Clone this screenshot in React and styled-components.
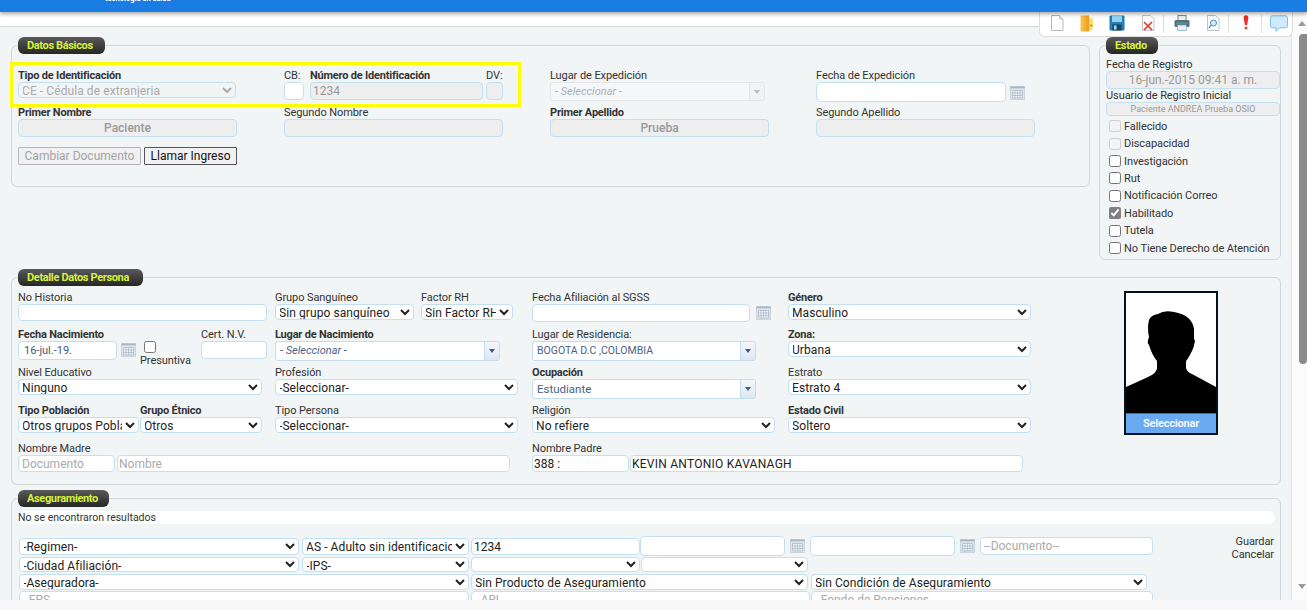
import React from "react";
import styled, { createGlobalStyle } from "styled-components";

const Global = createGlobalStyle`
  html, body { margin: 0; padding: 0; height: 610px; overflow: hidden; background: #f8f8f8; }
  * { box-sizing: border-box; }
  body { font-family: Roboto, "Liberation Sans", sans-serif; font-size: 11px; color: #333; }
`;

const Page = styled.div`display:flex;flex-direction:column;width:1307px;height:610px;position:relative;`;
const Header = styled.header`height:12px;flex:none;background:#1a7de3;box-shadow:0 2px 4px rgba(0,0,0,.35);position:relative;z-index:2;overflow:hidden;padding-left:105px;`;
const LogoText = styled.div`color:#fff;font-size:7.5px;font-weight:700;line-height:8px;margin-top:-5px;`;
const Body = styled.div`display:flex;height:588px;flex:none;`;
const Left = styled.div`width:1292px;display:flex;flex-direction:column;`;
const SubBar = styled.div`height:15px;flex:none;background:#fff;border-bottom:1px solid #d8d8d8;`;
const Main = styled.main`height:573px;overflow:hidden;background:#f1f5f6;border-right:1px solid #e2e4e5;padding:18px 0 0 11px;`;
const Bottom = styled.div`height:10px;flex:none;background:#f8f8f8;`;
const Scroll = styled.div`width:15px;flex:none;background:#fbfbfb;display:flex;flex-direction:column;align-items:flex-end;padding-top:9px;`;
const ArrowUp = styled.div`width:0;height:0;border:4px solid transparent;border-top:0;border-bottom:5px solid #9a9a9a;margin:0 1px 8px 0;`;
const Thumb = styled.div`width:8px;height:330px;background:#8b8b8b;border-radius:4px 0 4px 4px;`;
const ArrowDown = styled.div`width:0;height:0;border:4px solid transparent;border-bottom:0;border-top:5px solid #9a9a9a;margin:220px 1px 0 0;`;

const Toolbar = styled.div`position:absolute;top:12px;left:1039px;width:254px;height:25px;background:#fff;border:1px solid #dcdcdc;border-top:0;border-radius:0 0 6px 6px;z-index:1;display:flex;align-items:flex-start;padding:3px 0 0 8px;`;
const Tool = styled.div`width:${p=>p.$w}px;height:18px;display:flex;justify-content:center;flex:none;${p=>p.$sep?"border-right:1px solid #dedede;":""}`;

const Highlight = styled.div`position:absolute;left:10px;top:62px;width:511px;height:45px;border:3px solid #ffff00;pointer-events:none;z-index:1;`;

const TopRow = styled.div`display:flex;align-items:flex-start;gap:9px;`;
const Panel = styled.section`width:${p=>p.$w}px;height:${p=>p.$h}px;border:1px solid #d2d6d8;border-radius:6px;padding-left:6px;margin-top:${p=>p.$mt||0}px;flex:none;`;
const Legend = styled.div`width:${p=>p.$w}px;height:17px;margin-top:-9px;padding-left:9px;border-radius:6px;background:linear-gradient(#5a5a5a,#262626);color:#d6f23a;font-weight:700;font-size:11px;line-height:17px;letter-spacing:-.35px;white-space:nowrap;`;

const BasicGrid = styled.div`display:grid;grid-template-columns:266px 266px 266px 266px;grid-template-rows:37px 40px;margin-top:16px;`;
const DetailLayout = styled.div`display:flex;align-items:flex-start;margin-top:1px;`;
const DetailGrid = styled.div`display:grid;grid-template-columns:257px 257px 256px 243px;grid-template-rows:37px 38px 38px 38px 30px;margin-top:5px;`;
const Field = styled.div`display:flex;flex-direction:column;min-width:0;`;
const Line = styled.div`display:flex;align-items:flex-start;gap:${p=>p.$gap||0}px;`;
const Label = styled.label`display:block;height:12px;width:${p=>p.$w?p.$w+"px":"auto"};line-height:12px;font-size:11px;color:#333;font-weight:${p=>p.$b?700:400};letter-spacing:${p=>p.$b?"-.2px":"-.08px"};white-space:nowrap;flex:none;`;

const Input = styled.input`
  width:${p=>p.$w}px;height:${p=>p.$h||17}px;flex:none;margin:${p=>p.$mt||0}px ${p=>p.$mr||0}px 0 ${p=>p.$ml||0}px;padding:0 ${p=>p.$px??3}px;
  border:1px solid #c3e0f0;border-radius:4px;background:#fff;color:${p=>p.$blue?"#3d5a80":"#222"};
  font:${p=>p.$fw||400} ${p=>p.$fs||12}px Roboto,sans-serif;letter-spacing:${p=>p.$ls||0}px;text-align:${p=>p.$center?"center":"left"};outline:none;
  &::placeholder{color:#aaa;}
  &:disabled{background:#eeeeee;color:#999;opacity:1;}
`;
const Select = styled.select`
  width:${p=>p.$w}px;height:${p=>p.$h||17}px;flex:none;margin:0 ${p=>p.$mr||0}px 0 0;padding:0;
  border:1px solid #c3e0f0;border-radius:4px;background-color:#fff;color:#222;
  font:12px Roboto,sans-serif;letter-spacing:.08px;text-indent:-1px;outline:none;
  &:disabled{background-color:#f2f5f6;color:#aaa;opacity:1;}
`;
const Combo = styled.div`
  width:${p=>p.$w}px;height:${p=>p.$h||20}px;flex:none;display:flex;border:1px solid ${p=>p.$off?"#e2e6e8":"#c3dcee"};border-radius:3px;
  background:${p=>p.$off?"#f5f7f8":"#fff"};overflow:hidden;
`;
const ComboText = styled.div`flex:1;padding-left:4px;line-height:18px;font-size:${p=>p.$fs||11}px;color:${p=>p.$off?"#a8b0b8":"#4a5f88"};font-style:${p=>p.$it?"italic":"normal"};white-space:nowrap;`;
const ComboBtn = styled.div`width:15px;flex:none;border-left:1px solid ${p=>p.$off?"#e2e6e8":"#c3dcee"};background:${p=>p.$off?"#f0f2f3":"linear-gradient(#f4f7fa,#dde7f1)"};display:flex;align-items:center;justify-content:center;`;
const ComboArrow = styled.span`width:0;height:0;border:3.5px solid transparent;border-bottom:0;border-top:4px solid ${p=>p.$off?"#bbb":"#3c5c84"};`;
const CalWrap = styled.span`display:inline-flex;flex:none;margin:${p=>p.$t??2}px 0 0 ${p=>p.$l??5}px;`;

const Btn = styled.button`height:18px;padding:0;width:${p=>p.$w}px;margin:0;font:12px Roboto,sans-serif;background:#f1f1f1;border:1px solid ${p=>p.disabled?"#b5b5b5":"#555"};color:${p=>p.disabled?"#a3a3a3":"#111"};border-radius:1px;`;
const BtnRow = styled.div`display:flex;gap:3px;`;

const EstadoBody = styled.div`display:flex;flex-direction:column;margin-top:5px;`;
const EstadoGap = styled.div`height:1px;`;
const CheckList = styled.div`display:flex;flex-direction:column;margin-top:1.5px;padding-left:3px;`;
const CheckRow = styled.label`display:flex;align-items:center;height:17.43px;gap:3px;font-size:11px;letter-spacing:-.08px;color:#333;white-space:nowrap;`;
const Check = styled.input`width:12px;height:12px;margin:0;flex:none;accent-color:#808080;`;

const Photo = styled.div`width:94px;height:144px;margin:4px 0 0 93px;border:2px solid #04121f;background:#fff;display:flex;flex-direction:column;flex:none;`;
const Silhouette = styled.svg`display:block;flex:none;`;
const PhotoBtn = styled.div`height:20px;flex:none;background:#69aaf0;border-top:1px solid #666;color:#f2f7ff;font-weight:700;font-size:11px;letter-spacing:-.2px;text-align:center;line-height:20px;`;
const BirthField = styled(Field)`width:183px;flex:none;`;
const DateStack = styled.div`display:flex;flex-direction:column;align-items:flex-start;margin-left:8px;width:50px;flex:none;`;
const Presunt = styled.span`font-size:11px;letter-spacing:-.08px;line-height:12px;margin:2px 0 0 -4px;`;

const Result = styled.div`width:1257px;height:13px;background:#fff;border-radius:7px;font-size:10.5px;line-height:13px;margin-top:4px;white-space:nowrap;`;
const AsegRows = styled.div`display:flex;align-items:flex-start;margin-top:14px;`;
const AsegCol = styled.div`display:flex;flex-direction:column;padding-left:1px;`;
const Actions = styled.div`width:121px;margin-top:-3px;text-align:right;font-size:11px;line-height:13px;color:#333;flex:none;letter-spacing:-.1px;`;
const ARow = styled.div`display:flex;align-items:flex-start;height:${p=>p.$h}px;`;

const Cal = () => (
  <svg width="15" height="14" viewBox="0 0 15 14">
    <rect x="0.5" y="0.5" width="14" height="13" fill="#dde5ec" stroke="#cbd4dc" />
    <rect x="0.5" y="0.5" width="14" height="1.8" fill="#aab6c2" />
    <path d="M2.5 4.5h10v7.5h-10z M2.5 7h10 M2.5 9.5h10 M5 4.5v7.5 M7.5 4.5v7.5 M10 4.5v7.5" fill="#f0f4f7" stroke="#9cadc0" strokeWidth=".6" />
  </svg>
);
const Arrow = ({ off }) => <ComboBtn $off={off}><ComboArrow $off={off} /></ComboBtn>;

const Sel = ({ w, h, mr, v, disabled }) => (
  <Select $w={w} $h={h} $mr={mr} disabled={disabled} defaultValue={v}><option>{v}</option></Select>
);

const Icons = {
  doc: <svg width="14" height="16" viewBox="0 0 14 16"><path d="M1.5 .5h8l3.5 3.5v11.5h-11.5z" fill="#fff" stroke="#b8b8b8"/><path d="M9.5 .5v3.5h3.5" fill="#eee" stroke="#c4c4c4"/></svg>,
  folder: <svg width="14" height="17" viewBox="0 0 14 17"><defs><linearGradient id="fg" x1="0" x2="1"><stop offset="0" stopColor="#f9c84a"/><stop offset="1" stopColor="#f0981c"/></linearGradient></defs><path d="M.5 .5h8.5v16h-8.5z" fill="url(#fg)"/><path d="M9 2.5l4 1.2v10.6l-4 2z" fill="#f9dc78"/><circle cx="11.2" cy="10.5" r="1.1" fill="#6aa83c"/></svg>,
  save: <svg width="16" height="16" viewBox="0 0 16 16"><rect x=".5" y=".5" width="15" height="15" rx="1" fill="#1f7fb8"/><rect x="3" y=".5" width="10" height="6.5" fill="#8fd2f4"/><rect x="3.5" y="9.5" width="9" height="6" fill="#17465f"/><rect x="5" y="10.5" width="2.5" height="4" fill="#c8d4da"/></svg>,
  del: <svg width="14" height="16" viewBox="0 0 14 16"><path d="M1.5 .5h8l3.5 3.5v11.5h-11.5z" fill="#fff" stroke="#c4c4c4"/><path d="M3 7l8 8M11 7l-8 8" stroke="#e8332a" strokeWidth="1.7"/></svg>,
  print: <svg width="16" height="16" viewBox="0 0 16 16"><rect x="4" y=".5" width="8" height="5" fill="#f0f0f0" stroke="#888"/><rect x=".5" y="5" width="15" height="7" rx="1.5" fill="#5f6a72"/><rect x="2" y="7.5" width="12" height="1.2" fill="#2bb0b8"/><rect x="3.5" y="10" width="9" height="5.5" fill="#e8f0f4" stroke="#7aa8c0" strokeWidth=".7"/></svg>,
  find: <svg width="14" height="16" viewBox="0 0 14 16"><path d="M1.5 .5h8l3.5 3.5v11.5h-11.5z" fill="#fff" stroke="#bcc4cc"/><circle cx="7.5" cy="8" r="3" fill="#d6ecf8" stroke="#4a8cb8"/><path d="M5.3 10.2l-2.5 3" stroke="#4a8cb8" strokeWidth="1.3"/></svg>,
  alert: <svg width="6" height="16" viewBox="0 0 6 16"><path d="M.6 2.5a2.4 2.3 0 0 1 4.8 0l-1.3 7.5h-2.2z" fill="#ee2d24"/><circle cx="3" cy="13" r="1.5" fill="#e84a2c"/></svg>,
  chat: <svg width="18" height="18" viewBox="0 0 18 18"><path d="M2.5 .8h13a2 2 0 0 1 2 2v8a2 2 0 0 1-2 2h-6l-3.5 3.6v-3.6h-3.5a2 2 0 0 1-2-2v-8a2 2 0 0 1 2-2z" fill="#cfeafa" stroke="#7ac4ea"/></svg>,
};

const Panel1 = () => (
  <Panel $w={1079} $h={142}>
    <Legend $w={87}>Datos Básicos</Legend>
    <BasicGrid>
      <Field>
        <Label $b>Tipo de Identificación</Label>
        <Sel w={218} h={16} v="CE - Cédula de extranjeria" disabled />
      </Field>
      <Field>
        <Line>
          <Label $w={26}>CB:</Label>
          <Label $b $w={176}>Número de Identificación</Label>
          <Label>DV:</Label>
        </Line>
        <Line $gap={6}>
          <Input $w={20} $h={18} />
          <Line $gap={3}>
            <Input $w={173} $h={18} $px={2} disabled defaultValue="1234" />
            <Input $w={17} $h={18} disabled />
          </Line>
        </Line>
      </Field>
      <Field>
        <Label>Lugar de Expedición</Label>
        <Combo $w={215} $h={19} $off><ComboText $off $it>- Seleccionar -</ComboText><Arrow off /></Combo>
      </Field>
      <Field>
        <Label>Fecha de Expedición</Label>
        <Line>
          <Input $w={190} $h={20} />
          <CalWrap $t={4} $l={4}><Cal /></CalWrap>
        </Line>
      </Field>
      <Field>
        <Label $b>Primer Nombre</Label>
        <Input $w={219} $h={18} $center $fw={500} disabled defaultValue="Paciente" />
      </Field>
      <Field>
        <Label>Segundo Nombre</Label>
        <Input $w={219} $h={18} disabled />
      </Field>
      <Field>
        <Label $b>Primer Apellido</Label>
        <Input $w={219} $h={18} $center $fw={500} disabled defaultValue="Prueba" />
      </Field>
      <Field>
        <Label>Segundo Apellido</Label>
        <Input $w={219} $h={18} disabled />
      </Field>
    </BasicGrid>
    <BtnRow>
      <Btn $w={123} disabled>Cambiar Documento</Btn>
      <Btn $w={93}>Llamar Ingreso</Btn>
    </BtnRow>
  </Panel>
);

const Estado = () => (
  <Panel $w={182} $h={215}>
    <Legend $w={52}>Estado</Legend>
    <EstadoBody>
      <Label>Fecha de Registro</Label>
      <Input $w={174} $h={18} $center disabled defaultValue="16-jun.-2015 09:41 a. m." />
      <EstadoGap />
      <Label>Usuario de Registro Inicial</Label>
      <Input $w={174} $h={14} $fs={9} $center disabled defaultValue="Paciente ANDREA Prueba OSIO" />
    </EstadoBody>
    <CheckList>
      {[["Fallecido",0,1],["Discapacidad",0,1],["Investigación"],["Rut"],["Notificación Correo"],["Habilitado",1,0],["Tutela"],["No Tiene Derecho de Atención"]].map(([t,c,d]) => (
        <CheckRow key={t}><Check type="checkbox" defaultChecked={!!c} disabled={!!d} />{t}</CheckRow>
      ))}
    </CheckList>
  </Panel>
);

const Detail = () => (
  <Panel $w={1270} $h={208} $mt={17}>
    <Legend $w={125}>Detalle Datos Persona</Legend>
    <DetailLayout>
      <DetailGrid>
        <Field><Label>No Historia</Label><Input $w={249} $h={17} /></Field>
        <Field>
          <Line>
            <Label $w={146}>Grupo Sanguíneo</Label>
            <Label>Factor RH</Label>
          </Line>
          <Line $gap={7}>
            <Sel w={139} h={16} v="Sin grupo sanguíneo" />
            <Sel w={92} h={16} v="Sin Factor RH" />
          </Line>
        </Field>
        <Field>
          <Label>Fecha Afiliación al SGSS</Label>
          <Line><Input $w={218} $h={18} /><CalWrap $l={6}><Cal /></CalWrap></Line>
        </Field>
        <Field><Label $b>Género</Label><Sel w={243} h={16} v="Masculino" /></Field>

        <Field>
          <Line>
            <BirthField>
              <Label $b>Fecha Nacimiento</Label>
              <Line>
                <Input $w={99} $h={19} $px={5} $fs={11} $blue defaultValue="16-jul.-19." />
                <CalWrap $l={4}><Cal /></CalWrap>
                <DateStack>
                  <Check type="checkbox" />
                  <Presunt>Presuntiva</Presunt>
                </DateStack>
              </Line>
            </BirthField>
            <Field>
              <Label>Cert. N.V.</Label>
              <Input $w={66} $h={18} />
            </Field>
          </Line>
        </Field>
        <Field>
          <Label $b>Lugar de Nacimiento</Label>
          <Combo $w={225}><ComboText $it>- Seleccionar -</ComboText><Arrow /></Combo>
        </Field>
        <Field>
          <Label>Lugar de Residencia:</Label>
          <Combo $w={224}><ComboText $fs={10.5}>BOGOTA D.C ,COLOMBIA</ComboText><Arrow /></Combo>
        </Field>
        <Field><Label $b>Zona:</Label><Sel w={243} h={16} v="Urbana" /></Field>

        <Field><Label>Nivel Educativo</Label><Sel w={244} h={16} v="Ninguno" /></Field>
        <Field><Label>Profesión</Label><Sel w={243} h={16} v="-Seleccionar-" /></Field>
        <Field>
          <Label $b>Ocupación</Label>
          <Combo $w={224}><ComboText $fs={11.5}>Estudiante</ComboText><Arrow /></Combo>
        </Field>
        <Field><Label>Estrato</Label><Sel w={243} h={16} v="Estrato 4" /></Field>

        <Field>
          <Line $gap={1}>
            <Field>
              <Label $b>Tipo Población</Label>
              <Sel w={121} h={16} v="Otros grupos Poblacionales" />
            </Field>
            <Field>
              <Label $b>Grupo Étnico</Label>
              <Sel w={122} h={16} v="Otros" />
            </Field>
          </Line>
        </Field>
        <Field><Label>Tipo Persona</Label><Sel w={243} h={16} v="-Seleccionar-" /></Field>
        <Field><Label>Religión</Label><Sel w={243} h={16} v="No refiere" /></Field>
        <Field><Label $b>Estado Civil</Label><Sel w={243} h={16} v="Soltero" /></Field>

        <Field>
          <Label>Nombre Madre</Label>
          <Line $gap={2}>
            <Input $w={97} $h={17} placeholder="Documento" />
            <Input $w={393} $h={17} $px={1} $mr={-400} placeholder="Nombre" />
          </Line>
        </Field>
        <Field />
        <Field>
          <Label>Nombre Padre</Label>
          <Line $gap={1}>
            <Input $w={97} $h={17} $px={1} defaultValue="388 :" />
            <Input $w={393} $h={17} $px={1} $mr={-400} $ls={.25} defaultValue="KEVIN ANTONIO KAVANAGH" />
          </Line>
        </Field>
        <Field />
      </DetailGrid>
      <Photo>
        <Silhouette width="90" height="120" viewBox="0 0 90 120">
          <path fill="#000" d="M0 94L22 84Q31 80 31 75L31 68Q26 62 23 52Q21 50 22 47L23 44Q21 35 23 27Q25 22 32 21Q38 17 48 19Q66 22 68 36L68 46L69 48Q68 54 66 58Q62 66 60 68L60 75Q61 79 66 81L90 94L90 120L0 120Z" />
        </Silhouette>
        <PhotoBtn>Seleccionar</PhotoBtn>
      </Photo>
    </DetailLayout>
  </Panel>
);

const Aseg = () => (
  <Panel $w={1270} $h={110} $mt={13}>
    <Legend $w={91}>Aseguramiento</Legend>
    <Result>No se encontraron resultados</Result>
    <AsegRows>
      <AsegCol>
        <ARow $h={19}>
          <Sel w={280} h={17} mr={3} v="-Regimen-" />
          <Sel w={167} h={17} mr={2} v="AS - Adulto sin identificacion" />
          <Input $w={169} $h={17} $px={2} defaultValue="1234" />
          <Input $w={145} $h={20} $mt={-2} />
          <CalWrap $t={1}><Cal /></CalWrap>
          <Input $w={145} $h={20} $mt={-2} $ml={5} />
          <CalWrap $t={1}><Cal /></CalWrap>
          <Input $w={173} $h={18} $mt={-1} $ml={5} placeholder="--Documento--" />
        </ARow>
        <ARow $h={17}>
          <Sel w={280} h={15} mr={3} v="-Ciudad Afiliación-" />
          <Sel w={167} h={15} mr={2} v="-IPS-" />
          <Sel w={169} h={15} mr={1} v="" />
          <Sel w={167} h={15} v="" />
        </ARow>
        <ARow $h={17}>
          <Sel w={450} h={16} mr={2} v="-Aseguradora-" />
          <Sel w={337} h={16} mr={3} v="Sin Producto de Aseguramiento" />
          <Sel w={336} h={16} v="Sin Condición de Aseguramiento" />
        </ARow>
        <ARow $h={17}>
          <Input $w={450} $h={18} $px={2} $mr={2} placeholder="--EPS--" />
          <Input $w={339} $h={18} $px={2} $mr={1} placeholder="--ARL--" />
          <Input $w={342} $h={18} $px={2} placeholder="--Fondo de Pensiones--" />
        </ARow>
      </AsegCol>
      <Actions>Guardar<br />Cancelar</Actions>
    </AsegRows>
  </Panel>
);

export default function App() {
  return (
    <Page>
      <Global />
      <Header><LogoText>tecnología en salud</LogoText></Header>
      <Body>
        <Left>
          <SubBar />
          <Main>
            <TopRow><Panel1 /><Estado /></TopRow>
            <Detail />
            <Aseg />
          </Main>
        </Left>
        <Scroll>
          <ArrowUp />
          <Thumb />
          <ArrowDown />
        </Scroll>
      </Body>
      <Bottom />
      <Highlight />
      <Toolbar>
        <Tool $w={18}>{Icons.doc}</Tool>
        <Tool $w={12} />
        <Tool $w={18}>{Icons.folder}</Tool>
        <Tool $w={12} />
        <Tool $w={18}>{Icons.save}</Tool>
        <Tool $w={13} />
        <Tool $w={18}>{Icons.del}</Tool>
        <Tool $w={7} $sep />
        <Tool $w={9} />
        <Tool $w={18}>{Icons.print}</Tool>
        <Tool $w={13} />
        <Tool $w={18}>{Icons.find}</Tool>
        <Tool $w={7} $sep />
        <Tool $w={8} />
        <Tool $w={18}>{Icons.alert}</Tool>
        <Tool $w={7} $sep />
        <Tool $w={8} />
        <Tool $w={18}>{Icons.chat}</Tool>
      </Toolbar>
    </Page>
  );
}
